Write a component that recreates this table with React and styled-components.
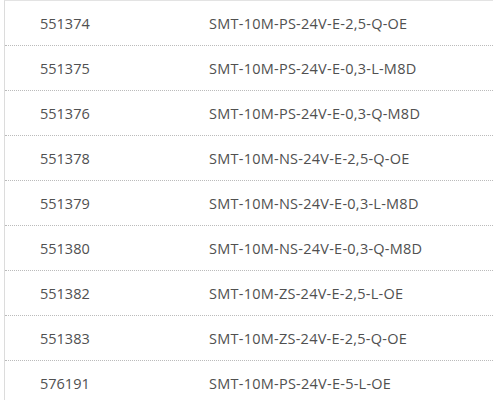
import React from 'react'
import styled, { createGlobalStyle } from 'styled-components'

const GlobalStyle = createGlobalStyle`
  html, body {
    margin: 0;
    padding: 0;
    background: #fff;
  }
`

const parts = [
  ['551374', 'SMT-10M-PS-24V-E-2,5-Q-OE'],
  ['551375', 'SMT-10M-PS-24V-E-0,3-L-M8D'],
  ['551376', 'SMT-10M-PS-24V-E-0,3-Q-M8D'],
  ['551378', 'SMT-10M-NS-24V-E-2,5-Q-OE'],
  ['551379', 'SMT-10M-NS-24V-E-0,3-L-M8D'],
  ['551380', 'SMT-10M-NS-24V-E-0,3-Q-M8D'],
  ['551382', 'SMT-10M-ZS-24V-E-2,5-L-OE'],
  ['551383', 'SMT-10M-ZS-24V-E-2,5-Q-OE'],
  ['576191', 'SMT-10M-PS-24V-E-5-L-OE']
]

const Table = styled.div`
  margin-left: 4px;
  border-top: 1px solid #e3e3e3;
  border-left: 1px solid #dcdcdc;
  font-family: 'Open Sans', 'Noto Sans', sans-serif;
  font-size: 14.5px;
  color: #505050;
`

const Row = styled.div`
  display: grid;
  grid-template-columns: 169px 1fr;
  align-items: center;
  height: 44px;
  padding-left: 35px;
  border-bottom: 1px dotted #bbb;
`

const Cell = styled.span`
  white-space: nowrap;
  letter-spacing: ${(p) => (p.$code ? '0.25px' : '0')};
`

export default function App() {
  return (
    <>
      <GlobalStyle />
      <Table>
        {parts.map(([no, code]) => (
          <Row key={no}>
            <Cell>{no}</Cell>
            <Cell $code>{code}</Cell>
          </Row>
        ))}
      </Table>
    </>
  )
}
